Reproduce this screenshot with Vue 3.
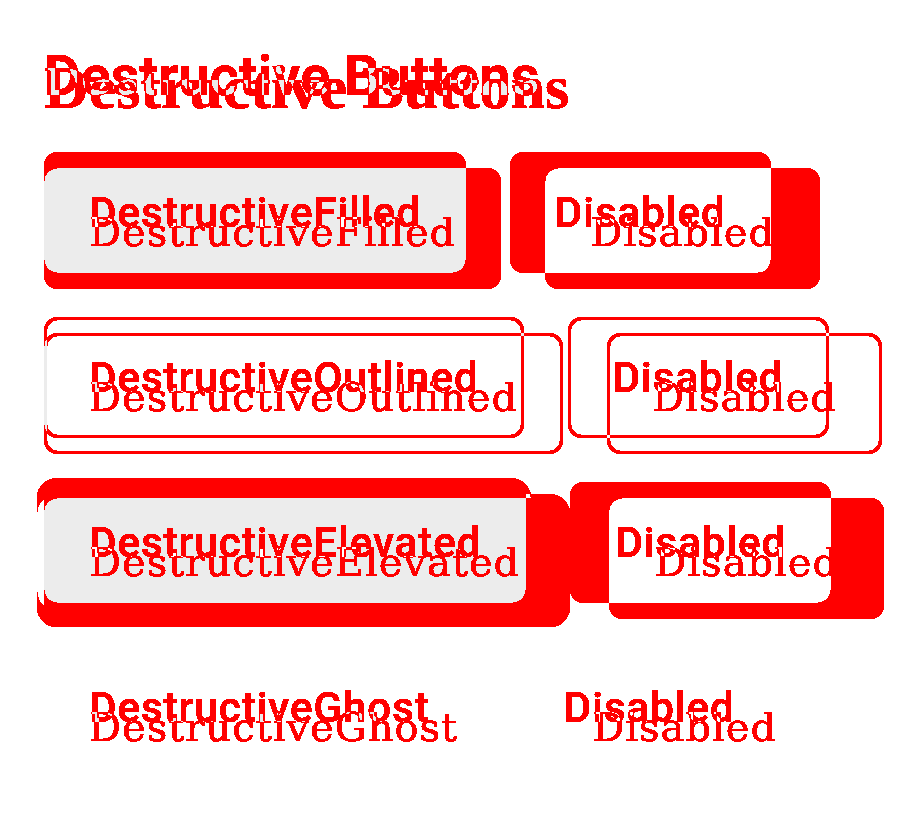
<script setup>
const layers = [
  { id: 'before', label: 'Before' },
  { id: 'after', label: 'After' },
]
const rows = [
  { kind: 'filled', text: 'DestructiveFilled' },
  { kind: 'outlined', text: 'DestructiveOutlined' },
  { kind: 'elevated', text: 'DestructiveElevated' },
  { kind: 'ghost', text: 'DestructiveGhost' },
]
const changedSteps = [0, ...Array(18).fill(1), 0].join(' ')
const sameSteps = [...Array(19).fill(0), 1].join(' ')
</script>

<template>
  <!-- Channels: red = enabled surface, green = text, blue = disabled surface or shadow.
       The layers are averaged; the filter paints every mid value as a difference. -->
  <svg class="defs" aria-hidden="true">
    <filter id="diff" x="0" y="0" width="100%" height="100%" color-interpolation-filters="sRGB">
      <feComponentTransfer in="SourceGraphic" result="changed">
        <feFuncR type="discrete" :tableValues="changedSteps" />
        <feFuncG type="discrete" :tableValues="changedSteps" />
        <feFuncB type="discrete" :tableValues="changedSteps" />
      </feComponentTransfer>
      <feColorMatrix
        in="changed"
        result="red"
        values="0 0 0 0 1  -1 -1 -1 0 1  -1 -1 -1 0 1  0 0 0 0 1"
      />
      <feComponentTransfer in="SourceGraphic" result="same">
        <feFuncR type="discrete" :tableValues="sameSteps" />
      </feComponentTransfer>
      <feColorMatrix
        in="same"
        result="grey"
        values="-0.075 0 0 0 1  -0.075 0 0 0 1  -0.075 0 0 0 1  0 0 0 0 1"
      />
      <feBlend in="red" in2="grey" mode="multiply" />
    </filter>
  </svg>

  <main class="stage">
    <section
      v-for="layer in layers"
      :key="layer.id"
      :class="['layer', layer.id]"
      :aria-label="layer.label"
    >
      <h1 class="title">Destructive Buttons</h1>
      <div class="rows">
        <div v-for="row in rows" :key="row.kind" class="row">
          <button type="button" :class="['btn', row.kind]">{{ row.text }}</button>
          <button type="button" :class="['btn', row.kind]" disabled>Disabled</button>
        </div>
      </div>
    </section>
  </main>
</template>

<style>
body {
  margin: 0;
  background: #fff;
}
</style>

<style scoped>
.defs {
  position: absolute;
  width: 0;
  height: 0;
}
.stage {
  display: grid;
  background: #000;
  filter: url(#diff);
  overflow: hidden;
}
.layer {
  grid-area: 1 / 1;
  min-width: 0;
  padding: 44px;
  background: #000;
}
.before {
  font-family: Roboto, sans-serif;
}
.after {
  font-family: "DejaVu Serif", serif;
  opacity: 0.5;
}
.title {
  margin: 0 0 44px;
  color: #ff0;
  font-size: 56px;
  line-height: 64px;
  font-weight: 600;
  white-space: nowrap;
}
.after .title {
  margin-bottom: 38px;
  font-family: "Liberation Serif", serif;
  font-size: 62px;
  line-height: 86px;
}
.rows {
  display: flex;
  flex-direction: column;
  gap: 44px;
}
.row {
  display: flex;
  gap: 44px;
}
.btn {
  flex: none;
  box-sizing: border-box;
  height: 121px;
  margin: 0;
  padding: 0 42px;
  border: 3px solid transparent;
  border-radius: 14px;
  background: none;
  color: #0f0;
  font-family: inherit;
  font-size: 42px;
  font-weight: 500;
  line-height: 56px;
  letter-spacing: 1px;
  white-space: nowrap;
}
.after .btn {
  padding-top: 6px;
  font-size: 40px;
  font-weight: 400;
}
.filled,
.elevated {
  border-color: #f00;
  background: #f00;
}
.elevated {
  box-shadow: -1px 2px 0 6px #00f;
}
.outlined {
  border-color: #f00;
  color: #ff0;
}
.ghost {
  color: #ff0;
}
.filled:disabled,
.elevated:disabled {
  border-color: #00f;
  background: #00f;
  box-shadow: none;
}
.outlined:disabled {
  border-color: #00f;
}
.btn:disabled {
  color: #0f0;
}
</style>
